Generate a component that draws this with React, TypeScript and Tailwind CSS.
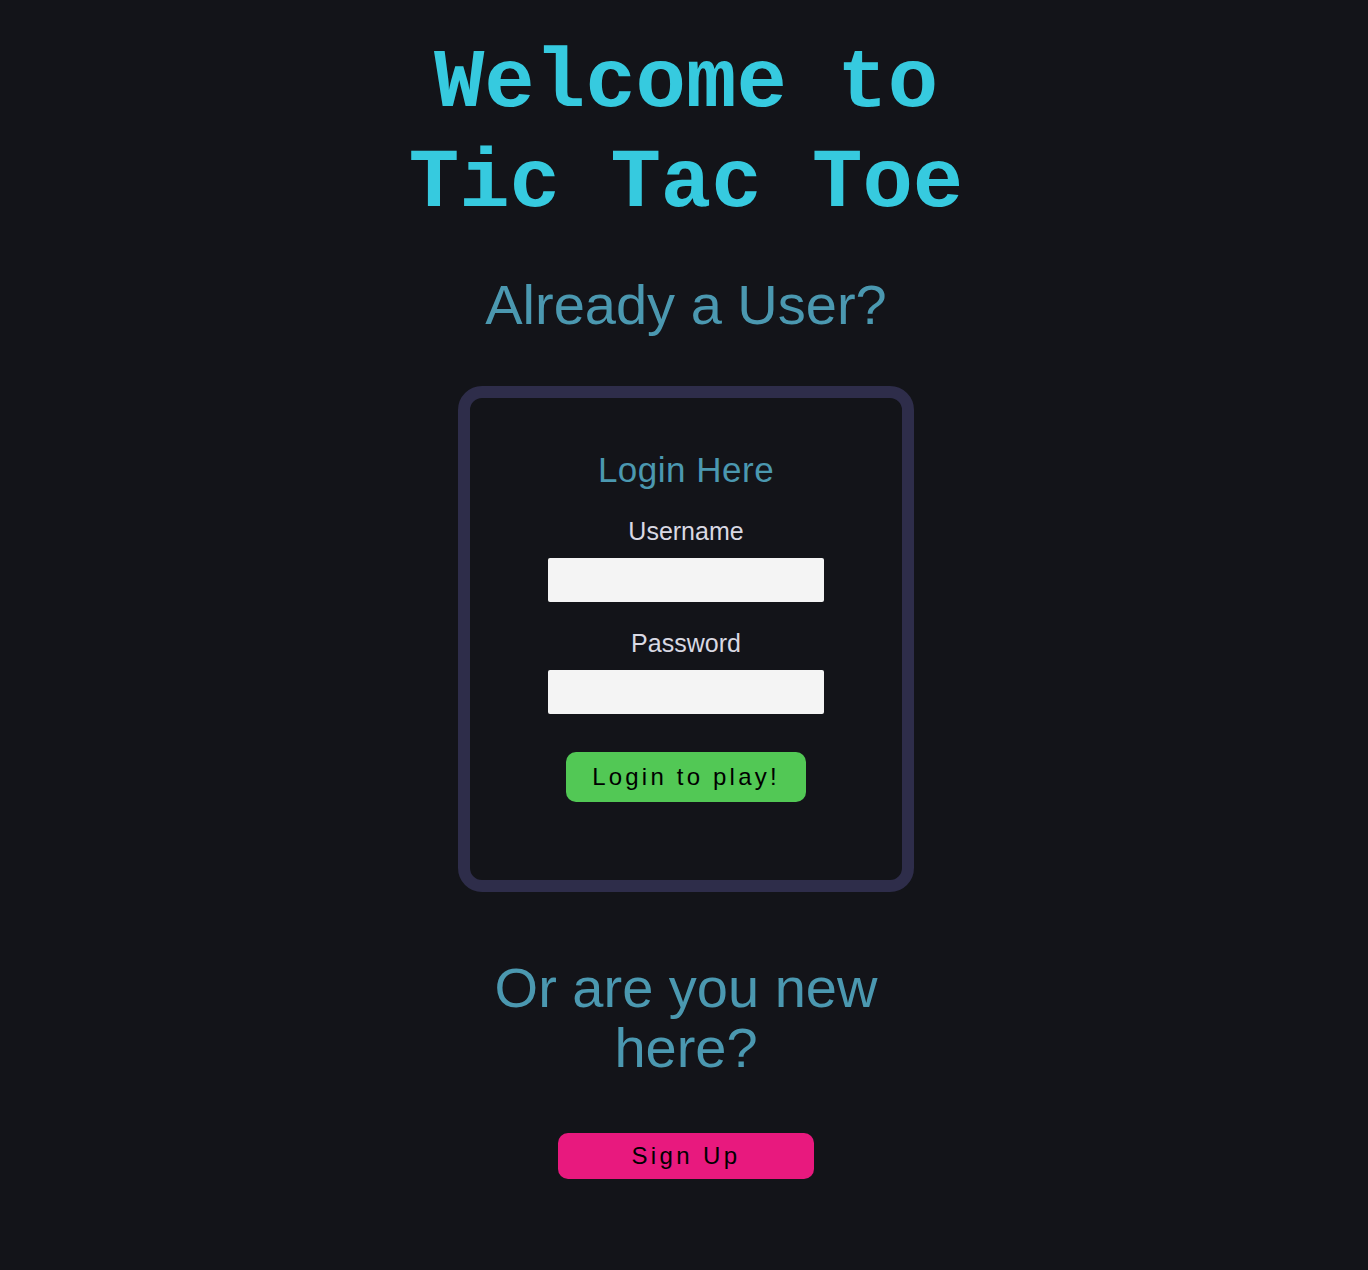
import React, { useState } from 'react';

const App: React.FC = () => {
  const [username, setUsername] = useState('');
  const [password, setPassword] = useState('');

  return (
    <div className="min-h-[1270px] bg-[#131419] flex flex-col items-center pl-[4px] font-['Liberation_Sans',Arial,sans-serif]">
      <h1 className="mt-[34px] w-[600px] text-center font-['Liberation_Mono','Courier_New',monospace] font-bold text-[84px] leading-[100px] text-[#36cadf]">
        Welcome to Tic Tac Toe
      </h1>

      <h2 className="mt-[41px] text-center text-[56px] leading-[60px] text-[#4b98b0]">Already a User?</h2>

      <form
        className="mt-[51px] w-[456px] h-[506px] border-[12px] border-[#2e2d4a] rounded-[24px] flex flex-col items-center pt-[52px]"
        onSubmit={e => e.preventDefault()}
      >
        <h3 className="text-[35px] leading-[40px] tracking-[0.5px] text-[#4b98b0]">Login Here</h3>

        <label htmlFor="username" className="mt-[26px] text-[25px] leading-[30px] text-[#d9d9e3]">Username</label>
        <input
          id="username"
          value={username}
          onChange={e => setUsername(e.target.value)}
          className="mt-[12px] w-[276px] h-[44px] rounded-[2px] bg-[#f4f4f4] px-2 text-black outline-none"
        />

        <label htmlFor="password" className="mt-[26px] text-[25px] leading-[30px] text-[#d9d9e3]">Password</label>
        <input
          id="password"
          type="password"
          value={password}
          onChange={e => setPassword(e.target.value)}
          className="mt-[12px] w-[276px] h-[44px] rounded-[2px] bg-[#f4f4f4] px-2 text-black outline-none"
        />

        <button type="submit" className="mt-[38px] w-[240px] h-[50px] rounded-[10px] bg-[#52c855] text-black text-[24px] tracking-[3.2px]">
          Login to play!
        </button>
      </form>

      <h2 className="mt-[66px] w-[456px] text-center text-[56px] leading-[60px] text-[#4b98b0]">Or are you new here?</h2>

      <button className="mt-[55px] w-[256px] h-[46px] rounded-[10px] bg-[#e8197e] text-black text-[24px] tracking-[3.4px]">
        Sign Up
      </button>
    </div>
  );
};

export default App;
